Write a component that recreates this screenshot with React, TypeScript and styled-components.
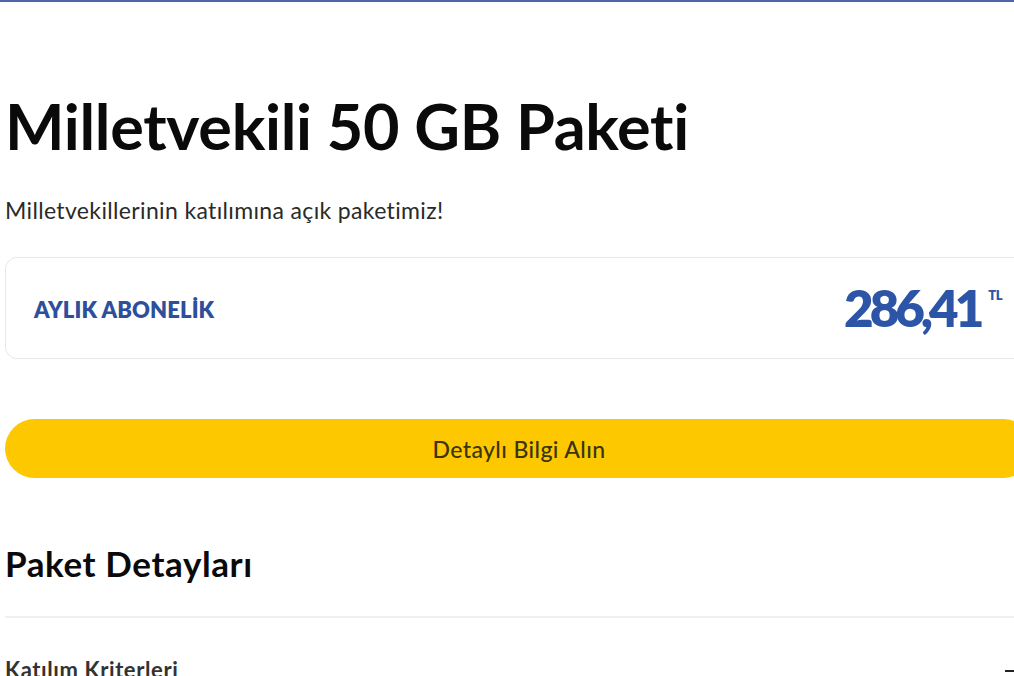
import React from "react";
import styled, { createGlobalStyle } from "styled-components";

const Global = createGlobalStyle`
  html, body { margin: 0; padding: 0; background: #ffffff; overflow: hidden; }
  body { font-family: "Lato", "Noto Sans", sans-serif; width: 1014px; height: 676px; }
`;

const Page = styled.div`
  border-top: 2px solid #4d66aa;
  width: 1014px;
  height: 674px;
  overflow: hidden;
`;

const Content = styled.div`
  width: 1030px;
  margin-left: 5px;
  padding-top: 86px;
  display: flex;
  flex-direction: column;
`;

const Title = styled.h1`
  margin: 0;
  font-size: 63px;
  font-weight: 700;
  color: #0a0a0a;
  line-height: 76px;
  letter-spacing: -0.3px;
`;

const Subtitle = styled.p`
  margin: 32px 0 0;
  font-size: 23px;
  color: #2a2a2a;
  line-height: 28px;
  letter-spacing: 0.35px;
`;

const PriceCard = styled.div`
  margin-top: 33px;
  height: 102px;
  box-sizing: border-box;
  border: 1.5px solid #e6e7ea;
  border-radius: 12px;
  display: flex;
  align-items: center;
  padding: 0 30px 0 28px;
  width: 1040px;
`;

const PlanLabel = styled.span`
  font-size: 22px;
  font-weight: 800;
  color: #2d4f9c;
  letter-spacing: 0.1px;
  margin-top: 2px;
`;

const Price = styled.div`
  margin-left: auto;
  margin-right: 12px;
  display: flex;
  align-items: flex-start;
  color: #2c55a8;
`;

const Amount = styled.span`
  font-size: 51px;
  font-weight: 800;
  line-height: 54px;
  letter-spacing: -4px;
`;

const Currency = styled.sup`
  font-size: 13px;
  font-weight: 800;
  margin-left: 8px;
  margin-top: 8px;
  line-height: 13px;
  letter-spacing: -0.5px;
  vertical-align: baseline;
`;

const CtaButton = styled.button`
  margin-top: 60px;
  height: 59px;
  border: none;
  border-radius: 30px;
  background: #fec800;
  font-family: inherit;
  font-size: 23px;
  font-weight: 500;
  color: #3b3510;
  letter-spacing: 0.4px;
  width: 1028px;
  cursor: pointer;
`;

const SectionTitle = styled.h2`
  margin: 64px 0 0;
  font-size: 35px;
  font-weight: 700;
  color: #0a0a0a;
  line-height: 42px;
  letter-spacing: 0.6px;
`;

const Divider = styled.hr`
  margin: 32px 0 0;
  border: none;
  border-top: 2px solid #f0f0f1;
  width: 1030px;
`;

const AccordionRow = styled.div`
  margin-top: 38px;
  display: flex;
  align-items: center;
  justify-content: space-between;
  width: 1014px;
`;

const RowLabel = styled.span`
  font-size: 22px;
  font-weight: 700;
  color: #333333;
  letter-spacing: 0.6px;
`;

const Minus = styled.span`
  display: block;
  width: 14px;
  height: 2px;
  background: #222;
  margin-top: 2px;
`;

export default function App() {
  return (
    <>
      <Global />
      <Page>
        <Content>
          <Title>Milletvekili 50 GB Paketi</Title>
          <Subtitle>Milletvekillerinin katılımına açık paketimiz!</Subtitle>
          <PriceCard>
            <PlanLabel>AYLIK ABONELİK</PlanLabel>
            <Price>
              <Amount>286,41</Amount>
              <Currency>TL</Currency>
            </Price>
          </PriceCard>
          <CtaButton>Detaylı Bilgi Alın</CtaButton>
          <SectionTitle>Paket Detayları</SectionTitle>
          <Divider />
          <AccordionRow>
            <RowLabel>Katılım Kriterleri</RowLabel>
            <Minus />
          </AccordionRow>
        </Content>
      </Page>
    </>
  );
}
